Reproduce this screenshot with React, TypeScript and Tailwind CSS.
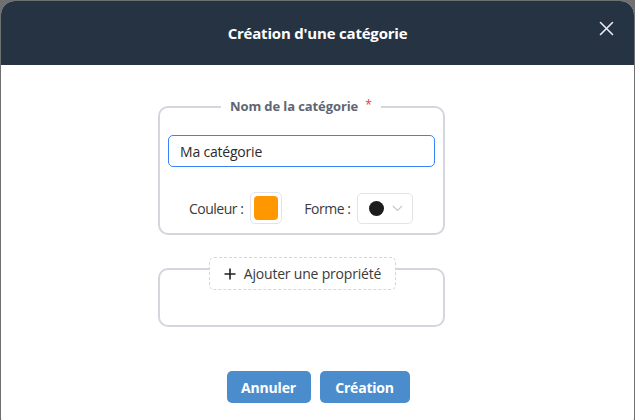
import React from "react";

export default function App() {
  return (
    <div
      className="w-[635px] h-[420px] bg-[#6f7072] overflow-hidden pl-[1px] pr-[1px] pt-[1px]"
      style={{ fontFamily: '"Open Sans", "Noto Sans", sans-serif' }}
    >
      <div className="w-[633px] h-[430px] bg-white rounded-[14px] overflow-hidden flex flex-col">
        <div className="h-[64px] bg-[#263342] relative flex items-center justify-center shrink-0">
          <span className="text-white font-bold text-[15px] tracking-[-0.2px]">Création d'une catégorie</span>
          <svg className="absolute left-[598px] top-[20px]" width="15" height="15" viewBox="0 0 15 15">
            <path d="M1.5 1.5 L13.5 13.5 M13.5 1.5 L1.5 13.5" stroke="#e8ecf0" strokeWidth="1.6" strokeLinecap="round" />
          </svg>
        </div>
        <div className="flex flex-col items-start pt-[41px] pl-[157px]">
          <div className="relative w-[287px] h-[129px] border-2 border-[#d3d6dc] rounded-[10px] flex flex-col px-[8px] pt-[27px]">
            <div className="absolute left-[61px] top-[-10px] bg-white px-[9px] flex items-center h-[18px]">
              <span className="text-[13px] font-bold text-[#5e6673] tracking-[-0.1px]">Nom de la catégorie</span>
              <span className="text-[12px] text-[#e53935] ml-[7px] leading-none -mt-[4px]">*</span>
            </div>
            <div className="h-[32px] border border-[#3b82f6] rounded-[5px] flex items-center px-[11px] text-[14px] text-[#2a2a2a] tracking-[-0.2px]">
              Ma catégorie
            </div>
            <div className="flex items-center mt-[25px] pl-[21px]">
              <span className="text-[14px] text-[#3a3a3a] tracking-[-0.5px]">Couleur :</span>
              <div className="ml-[7px] w-[32px] h-[32px] border border-[#e2e4e8] rounded-[5px] flex items-center justify-center">
                <div className="w-[24px] h-[24px] bg-[#ff9800] rounded-[4px]" />
              </div>
              <span className="ml-[22px] text-[14px] text-[#3a3a3a] tracking-[-0.5px]">Forme :</span>
              <div className="ml-[7px] w-[56px] h-[31px] border border-[#e2e4e8] rounded-[5px] flex items-center pl-[11px]">
                <div className="w-[15px] h-[15px] rounded-full bg-[#1c1c1c]" />
                <svg className="ml-[8px]" width="11" height="7" viewBox="0 0 11 7">
                  <path d="M1 1 L5.5 5.5 L10 1" stroke="#c4c7cc" strokeWidth="1.1" fill="none" />
                </svg>
              </div>
            </div>
          </div>
          <div className="relative mt-[33px] w-[287px] h-[59px] border-2 border-[#d3d6dc] rounded-[10px]">
            <div className="absolute left-[49px] top-[-13px] w-[187px] h-[33px] bg-white border border-dashed border-[#d3d6dc] rounded-[5px] flex items-center justify-center">
              <svg width="12" height="12" viewBox="0 0 12 12">
                <path d="M6 0.5 V11.5 M0.5 6 H11.5" stroke="#1f1f1f" strokeWidth="1.6" />
              </svg>
              <span className="ml-[8px] text-[14px] text-[#3a3a3a] tracking-[-0.2px]">Ajouter une propriété</span>
            </div>
          </div>
        </div>
        <div className="flex justify-center gap-[9px] mt-[44px] pl-[1px]">
          <button className="w-[84px] h-[32px] bg-[#4b8dcc] rounded-[5px] text-white font-bold text-[14px] tracking-[-0.2px]">
            Annuler
          </button>
          <button className="w-[90px] h-[32px] bg-[#4b8dcc] rounded-[5px] text-white font-bold text-[14px] tracking-[-0.2px]">
            Création
          </button>
        </div>
      </div>
    </div>
  );
}
